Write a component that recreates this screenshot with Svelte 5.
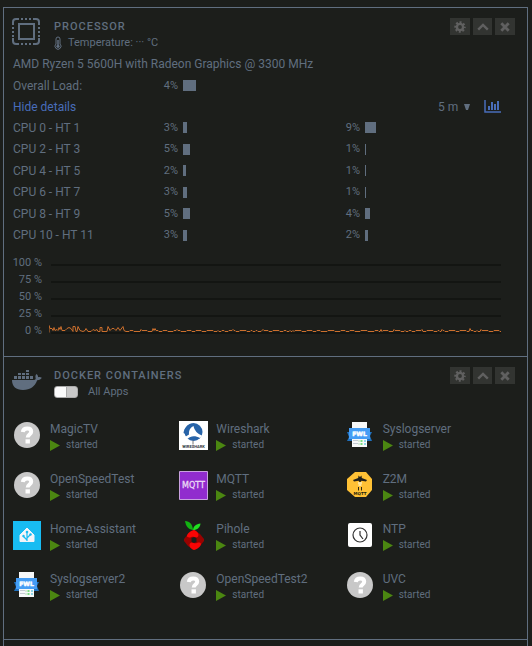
<script>
  const cores = [
    { name: 'CPU 0 - HT 1', a: 3, wa: 4, b: 9, wb: 11 },
    { name: 'CPU 2 - HT 3', a: 5, wa: 7, b: 1, wb: 1 },
    { name: 'CPU 4 - HT 5', a: 2, wa: 3, b: 1, wb: 1 },
    { name: 'CPU 6 - HT 7', a: 3, wa: 4, b: 1, wb: 1 },
    { name: 'CPU 8 - HT 9', a: 5, wa: 7, b: 4, wb: 5 },
    { name: 'CPU 10 - HT 11', a: 3, wa: 4, b: 2, wb: 3 }
  ];
  const scale = [100, 75, 50, 25, 0];
  const apps = [
    { name: 'MagicTV', icon: 'question' },
    { name: 'Wireshark', icon: 'wireshark' },
    { name: 'Syslogserver', icon: 'syslog' },
    { name: 'OpenSpeedTest', icon: 'question' },
    { name: 'MQTT', icon: 'mqtt' },
    { name: 'Z2M', icon: 'z2m' },
    { name: 'Home-Assistant', icon: 'home' },
    { name: 'Pihole', icon: 'pihole' },
    { name: 'NTP', icon: 'clock' },
    { name: 'Syslogserver2', icon: 'syslog' },
    { name: 'OpenSpeedTest2', icon: 'question' },
    { name: 'UVC', icon: 'question' }
  ];

  // Load history: busy at the start, then idle with a few small bumps.
  const busy = [
    [0, 78], [0, 71], [1, 74], [3, 74], [4, 76], [5, 73], [6, 76], [8, 75], [9, 76], [10, 73], [11, 75], [12, 72],
    [13, 76], [16, 76], [18, 74], [20, 73], [22, 74], [24, 77], [24, 72], [26, 72], [27, 77], [28, 77], [29, 72],
    [31, 76], [34, 77], [36, 76], [37, 74], [39, 77], [42, 77], [44, 75], [46, 76], [48, 75], [49, 77], [51, 77],
    [51, 73], [53, 73], [53, 77], [58, 77], [59, 72], [61, 76], [63, 74], [65, 74], [67, 76], [69, 73], [71, 76],
    [74, 72], [75, 76], [77, 77]
  ];
  const bumps = { 92: 75, 104: 74, 106: 74, 128: 75, 138: 76, 184: 75, 214: 75, 244: 76, 270: 76, 332: 75, 345: 75, 373: 75, 393: 75, 421: 74, 432: 75 };
  const idle = [];
  for (let x = 78; x <= 452; x += 1) {
    idle.push([x, bumps[x] ?? (x % 11 < 4 || x % 17 < 3 ? 77 : 76)]);
  }
  const line = [...busy, ...idle].map(([x, y]) => `${x},${y + 0.5}`).join(' ');
</script>

{#snippet controls(title)}
  <div class="controls">
    <button aria-label="{title} settings">
      <svg width="12" height="12" viewBox="0 0 12 12">
        <circle cx="6" cy="6" r="3.1" fill="none" stroke="currentColor" stroke-width="2.4" />
        <circle cx="6" cy="6" r="4.7" fill="none" stroke="currentColor" stroke-width="2" stroke-dasharray="2 1.69" stroke-dashoffset="1" />
      </svg>
    </button>
    <button aria-label="Collapse {title}">
      <svg width="12" height="12" viewBox="0 0 12 12"><path d="M1.2 8.6 6 3.9l4.8 4.7" fill="none" stroke="currentColor" stroke-width="2.4" /></svg>
    </button>
    <button aria-label="Close {title}">
      <svg width="12" height="12" viewBox="0 0 12 12"><path d="m2.3 2.3 7.4 7.4m0-7.4-7.4 7.4" fill="none" stroke="currentColor" stroke-width="2.8" /></svg>
    </button>
  </div>
{/snippet}

{#snippet load(value, width)}
  <span class="load"><span class="percent">{value}%</span><span class="bar" style="width: {width}px"></span></span>
{/snippet}

{#snippet appIcon(kind)}
  <svg class="app-icon" width="30" height="30" viewBox="0 0 30 30" aria-hidden="true">
    {#if kind === 'question'}
      <circle cx="15" cy="15" r="13" fill="#c8c8c8" />
      <path d="M10.800 12c.3-2.400 2-3.400 4.400-3.400s4 1.100 4 3.200c0 2.700-3.500 2.700-3.500 5.600" fill="none" stroke="#fff" stroke-width="4" />
      <path d="M13.500 19.300h4.400v4.200h-4.400z" fill="#fff" />
    {:else if kind === 'wireshark'}
      <path d="M1 1h29v29H1z" fill="#fff" />
      <circle cx="15.500" cy="12" r="9" fill="#2763a8" />
      <path d="M14.500 3.500C14 9 13.500 13 11 16l-5.500-3C6 8 9.500 4.300 14.500 3.500Z" fill="#2763a8" />
      <path d="M15.500 6c-3.500 1.500-5 5-4.500 8.500l-4 2.500 2.500 2c3-3.500 8-3.500 12.500-1l2-2.500c-4.500-1.500-7.500-5-8.500-9.500Z" fill="#fff" />
      <path d="M15 20.500v4" stroke="#777" />
      <text x="15.500" y="27.500" text-anchor="middle" font-size="4" font-weight="700" fill="#30373d">WIRESHARK</text>
    {:else if kind === 'syslog'}
      <path d="M7 2h15v25H7z" fill="#f7f9fa" />
      <path d="M2 12h5v9H2l2-4zM22 12h5l-2 4 2 5h-5z" fill="#1f70bd" />
      <path d="M4 8h21v11H4z" fill="#459df5" />
      <text class="wide" x="14.500" y="16" text-anchor="middle" font-size="6" font-weight="700" fill="#fff" stroke="#fff" stroke-width=".5">FWL</text>
      <path d="M8 20.500h5m-5 3h5" stroke="#c5ccd4" />
      <path d="M14 20v6" stroke="#b9dfbb" stroke-dasharray="2 1" />
      <path d="M16.500 20v6" stroke="#7ddf84" stroke-width="2" stroke-dasharray="2 1" />
      <path d="M20 20v6" stroke="#8fd8ea" stroke-width="2" stroke-dasharray="2 1" />
    {:else if kind === 'mqtt'}
      <path d="M1.500 1.500h28v28h-28z" fill="#912cce" stroke="#c8a0df" />
      <text class="wide" x="15.500" y="18" text-anchor="middle" font-size="8" fill="#ead8f5" stroke="#ead8f5" stroke-width=".3">MQTT</text>
    {:else if kind === 'z2m'}
      <path d="M10 2h11l6 7v11l-6 7H10l-8-7V9z" fill="#ffc135" />
      <path d="M13.500 5.500 15 7l1.500-1.500.3 2.500 5.200 2-1 1.500-4.500-.8-1.500 1.800-1.500-1.800-4.500.8L8 10l5.200-2z" fill="#222019" />
      <path d="M13 13h4M13.500 15h3" stroke="#fff0bd" stroke-width="1.500" />
      <path d="M13.500 17v3.500M16.500 17v3.500" stroke="#302912" />
      <text class="wide" x="15" y="25" text-anchor="middle" font-size="4" font-weight="700" fill="#201b0c">MQTT</text>
    {:else if kind === 'home'}
      <path d="M1 1h28v29H1z" fill="#18bcf2" />
      <path d="m15 8 7 7v6.500H8V15z" fill="#f2f4f9" stroke="#f2f4f9" stroke-linejoin="round" />
      <path d="M15 21V12m0 8-4-4m4 2 4-4" fill="none" stroke="#18bcf2" stroke-width="1.200" />
      <circle cx="15" cy="12" r="1.300" fill="#18bcf2" /><circle cx="11.500" cy="16" r="1.200" fill="#18bcf2" /><circle cx="18.500" cy="14.500" r="1.200" fill="#18bcf2" />
    {:else if kind === 'pihole'}
      <path d="M15 10C9.500 9 8 6 7 1c5 .5 7.500 3 8 9Z" fill="#12b212" />
      <path d="M15 10c.5-4 3-6 7.500-6.500-.5 4-3 6.500-7.500 6.500Z" fill="#20e020" />
      <path d="m16 10 6 4 4 5v2l-4 5-6 4-6-4-4-5v-2l4-5z" fill="#980200" />
      <path d="M16 10c3.500 1 5.500 4.500 4 6.500-1.200 1.700-3 .5-4.500.2-2.500-.3-3.500 1.500-6 .3-2-1.500 2-6 6.500-7Z" fill="#fb0505" />
      <path d="M16 30c-3.500-1-5.500-4.500-4-6.500 1.200-1.700 3-.5 4.500-.2 2.500.3 3.500-1.500 6-.3 2 1.500-2 6-6.500 7Z" fill="#fb0505" />
      <path d="m16 17 2.500 1v4L16 23l-2.500-1v-4z" fill="#1c1e1b" />
    {:else}
      <rect x="3" y="3" width="24" height="24" rx="2" fill="#fff" />
      <circle cx="15" cy="15" r="7" fill="none" stroke="#333" stroke-width="1.200" />
      <path d="M15 11v4l3 4" fill="none" stroke="#333" stroke-width="1.200" />
    {/if}
  </svg>
{/snippet}

<main>
  <section>
    <header>
      <svg class="section-icon" width="30" height="28" viewBox="0 0 30 28" aria-hidden="true">
        <rect x="7" y="6" width="15" height="15" fill="none" stroke="currentColor" stroke-width="2" />
        <path d="M1 7V4q0-3 3-3h3M21 1h3q3 0 3 3v3M27 20v3q0 3-3 3h-3M7 26H4q-3 0-3-3v-3M9 1h2m2 0h2m2 0h2M9 26h2m2 0h2m2 0h2M1 9v2m0 2v2m0 2v2M27 9v2m0 2v2m0 2v2" fill="none" stroke="currentColor" stroke-width="2" />
      </svg>
      <div class="heading">
        <h2>Processor</h2>
        <p class="sub">
          <svg class="thermo" width="8" height="14" viewBox="0 0 8 14" aria-hidden="true">
            <path d="M2 8V3a2 2 0 0 1 4 0v5a3 3 0 1 1-4 0Z" fill="none" stroke="currentColor" />
            <path d="M4 4v6" stroke="currentColor" stroke-width="1.500" /><circle cx="4" cy="10.300" r="1.600" fill="currentColor" />
          </svg>
          Temperature: ··· °C
        </p>
      </div>
      {@render controls('Processor')}
    </header>

    <p class="model">AMD Ryzen 5 5600H with Radeon Graphics @ 3300 MHz</p>
    <div class="row overall"><span>Overall Load:</span>{@render load(4, 13)}</div>
    <div class="tools">
      <a href="#details">Hide details</a>
      <span class="range">
        <select aria-label="Chart period"><option>5 m</option><option>1 m</option></select>
        <svg width="6" height="6" viewBox="0 0 6 6" aria-hidden="true"><path d="M0 0h6L4 6H2z" fill="currentColor" /></svg>
      </span>
      <a class="chart-link" href="#chart" aria-label="Toggle chart">
        <svg width="17" height="13" viewBox="0 0 17 13"><path d="M1 0v12h16" fill="none" stroke="currentColor" stroke-width="1.500" /><path d="M4 6h2v4H4zM7 2h2v8H7zM10 4h2v6h-2zM13 1h2v9h-2z" fill="currentColor" /></svg>
      </a>
    </div>

    <div class="cores" id="details">
      {#each cores as core}
        <div class="row"><span>{core.name}</span>{@render load(core.a, core.wa)}{@render load(core.b, core.wb)}</div>
      {/each}
    </div>

    <div class="chart" id="chart">
      <div class="scale">{#each scale as s}<span>{s} %</span>{/each}</div>
      <svg height="85" viewBox="0 0 452 85" preserveAspectRatio="none" role="img" aria-label="Processor load">
        <path d="M2 11h450M2 28h450M2 45h450M2 62h450M2 79h450" stroke="#131512" stroke-width="2" />
        <polyline points={line} fill="none" stroke="#cb6f2d" stroke-width="1" />
      </svg>
    </div>
  </section>

  <section class="docker">
    <header>
      <svg class="section-icon" width="30" height="28" viewBox="0 0 30 28" aria-hidden="true">
        <path d="M0 13h22c1.500 0 2-1 1.500-2.500-.3-1.500.2-2.700 1-3.500 1.200 1 1.600 2 1.600 3.300 1.200-.4 2.500-.2 3.700.5-.8 1.600-2.400 2.500-4.600 2.500C22.800 19.500 18.500 23 11 23 4 23 0 19.500 0 13Z" fill="currentColor" />
        <path d="M2 9h3v3H2zM6 9h3v3H6zM10 9h3v3h-3zM14 9h3v3h-3zM18 9h3v3h-3zM6 6h3v2H6zM10 6h3v2h-3zM14 6h3v2h-3zM14 3h3v2h-3z" fill="currentColor" />
      </svg>
      <div class="heading">
        <h2>Docker Containers</h2>
        <label class="sub"><input type="checkbox" role="switch" />All Apps</label>
      </div>
      {@render controls('Docker Containers')}
    </header>

    <div class="apps">
      {#each apps as app}
        <div class="app">
          {@render appIcon(app.icon)}
          <div class="app-text">
            <span>{app.name}</span>
            <span class="state"><svg width="10" height="11" viewBox="0 0 10 11" aria-hidden="true"><path d="M0 0v11l10-5.500z" fill="#4b8711" /></svg>started</span>
          </div>
        </div>
      {/each}
    </div>
  </section>
</main>

<style>
  :global(html) {
    background: #1c1e1b;
  }
  :global(body) {
    margin: 0;
  }
  main {
    box-sizing: border-box;
    min-height: calc(100vh - 7px);
    margin: 0 4px 0 3px;
    border: 1px solid #606e7f;
    border-bottom: 0;
    color: #606e7f;
    font: 12px/16px Roboto, sans-serif;
  }
  :global(#app) {
    padding-top: 7px;
  }
  section {
    padding: 10px 12px 17px 9px;
    border-bottom: 1px solid #606e7f;
  }
  .docker {
    padding-bottom: 29px;
  }
  header {
    display: flex;
    align-items: flex-start;
    height: 35px;
  }
  .section-icon {
    flex: none;
    margin-left: -1px;
  }
  .heading {
    flex: 1;
    margin-left: 12px;
  }
  h2 {
    margin: 0;
    font-size: 11px;
    line-height: 17px;
    font-weight: 500;
    letter-spacing: 1px;
    text-transform: uppercase;
  }
  p {
    margin: 0;
  }
  .sub {
    display: flex;
    align-items: center;
    font-size: 11px;
    line-height: 16px;
  }
  .thermo {
    margin-right: 6px;
  }
  .controls {
    display: flex;
    gap: 3px;
  }
  button {
    display: grid;
    place-items: center;
    width: 20px;
    height: 17px;
    padding: 0;
    border: 0;
    background: #323431;
    color: #606060;
  }
  button:nth-child(2) {
    width: 19px;
  }
  .model {
    line-height: 22px;
  }
  .row {
    display: grid;
    grid-template-columns: 149fr 182fr 171fr;
    align-items: center;
  }
  .overall,
  .tools {
    height: 21px;
  }
  .load {
    display: flex;
    align-items: center;
    gap: 5px;
  }
  .percent {
    width: 16px;
    display: flex;
    justify-content: flex-end;
    font-size: 11px;
  }
  .bar {
    height: 11px;
    background: #606e7f;
  }
  a {
    color: #486dba;
    text-decoration: none;
  }
  .tools {
    display: flex;
    align-items: center;
  }
  .range {
    display: flex;
    align-items: center;
    gap: 5px;
    margin-left: auto;
  }
  select {
    appearance: none;
    padding: 0;
    border: 0;
    background: none;
    color: inherit;
    font: inherit;
  }
  .chart-link {
    display: flex;
    margin: 0 14px;
  }
  .cores {
    display: flex;
    flex-direction: column;
    height: 129px;
  }
  .cores .row {
    flex: 1;
  }
  .chart {
    display: flex;
    gap: 7px;
    margin-top: 8px;
    padding-right: 14px;
  }
  .scale {
    width: 29px;
    display: flex;
    flex-direction: column;
    align-items: flex-end;
    font-size: 11px;
    line-height: 17px;
    white-space: nowrap;
  }
  .chart svg {
    flex: 1;
    min-width: 0;
  }
  input {
    appearance: none;
    width: 24px;
    height: 12px;
    margin: 0 10px 0 0;
    border-radius: 3px;
    border: 1px solid #aaa;
    background: linear-gradient(90deg, #fafafa 11px, #aaa 11px 12px, #c8c8c8 12px);
  }
  .apps {
    display: grid;
    grid-template-columns: repeat(3, 1fr);
    margin: 8px 3px 0 0;
  }
  .app {
    display: flex;
    align-items: center;
    height: 50px;
  }
  .app-icon {
    flex: none;
    margin: 0 8px 0 -1px;
  }
  .wide {
    font-family: 'DejaVu Sans', sans-serif;
  }
  .app-text {
    display: flex;
    flex-direction: column;
    padding-top: 4px;
  }
  .state {
    display: flex;
    align-items: center;
    gap: 6px;
    font-size: 10px;
  }
</style>
